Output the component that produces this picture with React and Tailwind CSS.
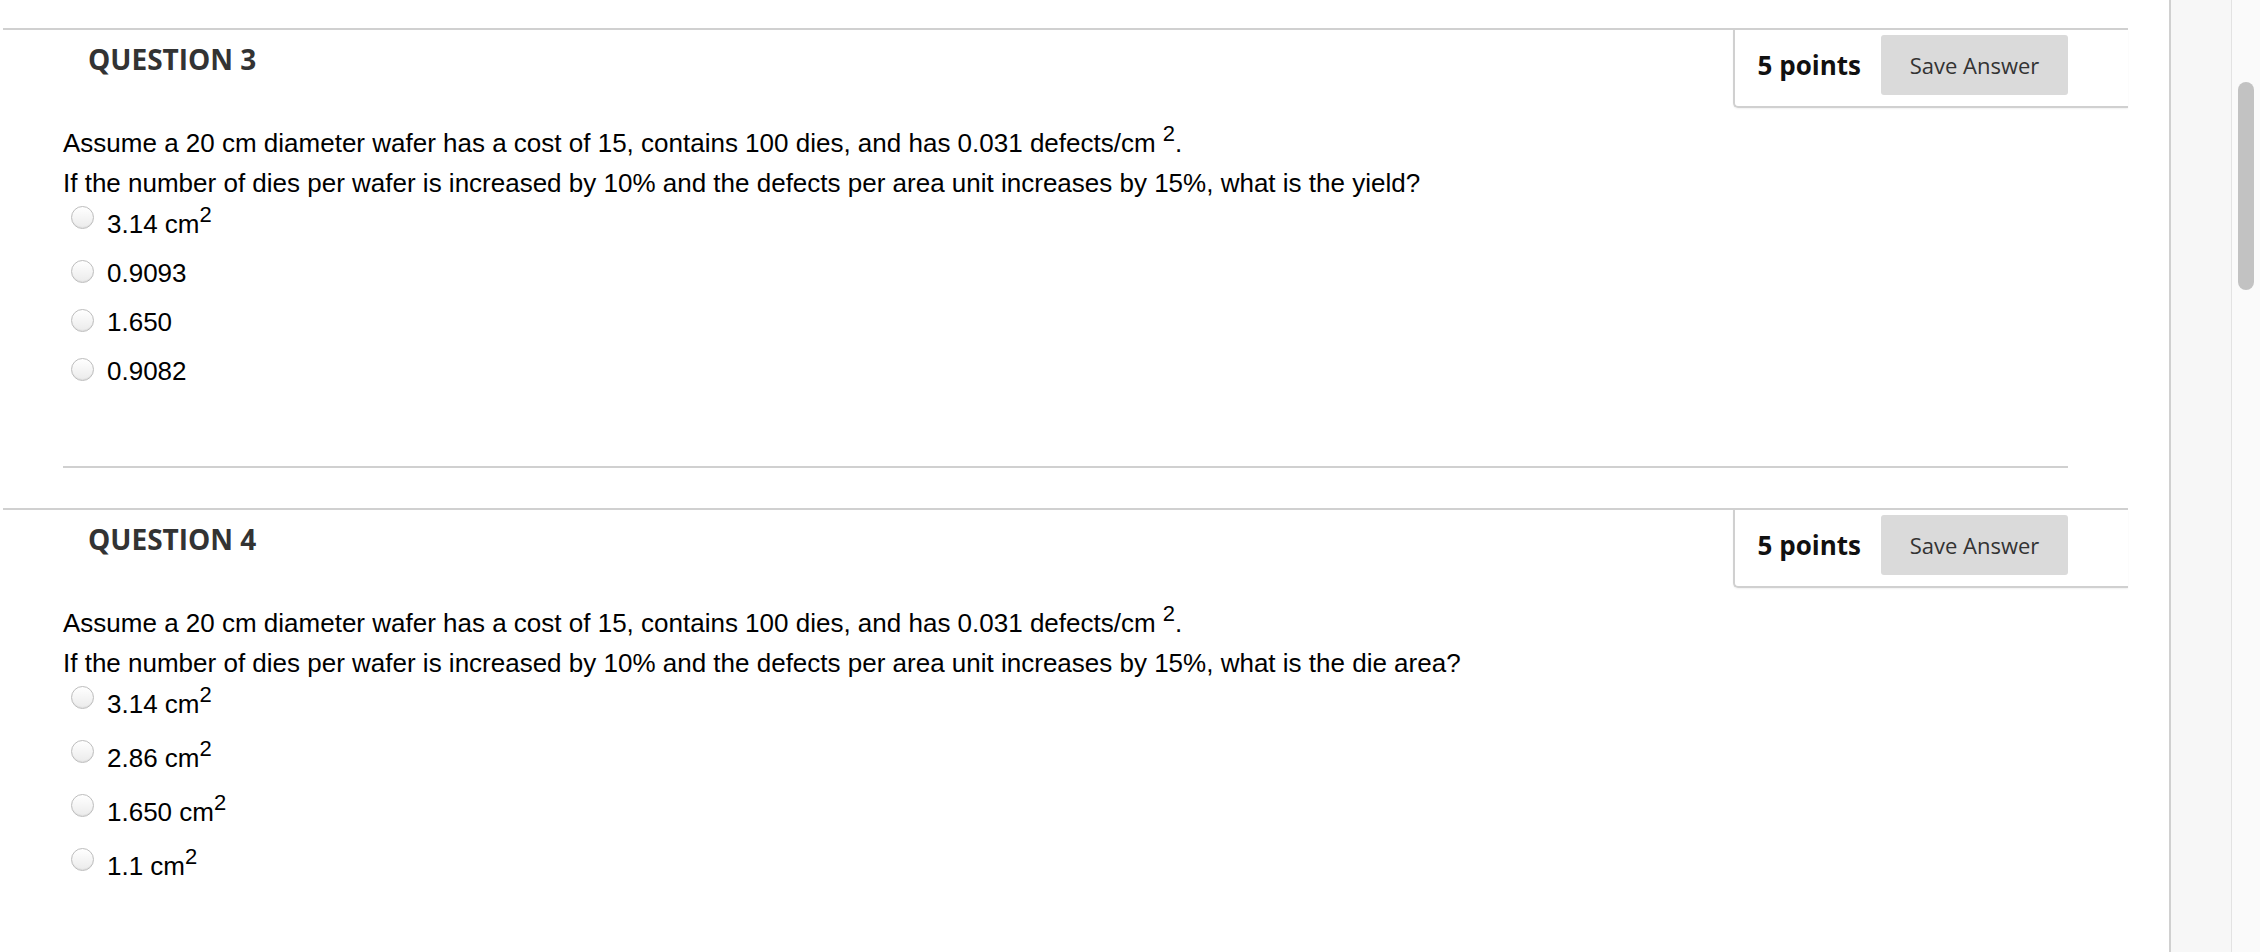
import React from "react";

const body = "font-['Liberation_Sans',Arial,sans-serif]";
const heading = "font-['Open_Sans',sans-serif]";

// raised "2" used for cm²
function Sq() {
  return <sup className="text-[22px]">2</sup>;
}

function Radio() {
  return (
    <span className="mt-[7px] ml-[8px] h-[23px] w-[23px] shrink-0 rounded-full border border-[#bdbdbd] bg-linear-to-b from-white to-[#ebebeb] shadow-[inset_0_-1px_1px_rgba(0,0,0,0.05)]" />
  );
}

function Option({ label, sq }) {
  return (
    <label className="flex items-start">
      <Radio />
      <span className={`ml-[13px] leading-[40px] ${sq ? "pt-[5px]" : ""}`}>
        {label}
        {sq && <Sq />}
      </span>
    </label>
  );
}

function Question({ number, ask, options }) {
  return (
    <section className="ml-[3px] w-[2125px] border-t-2 border-[#d0d0d0]">
      <div className="flex items-start justify-between">
        <h2 className={`${heading} pl-[85px] pt-[11px] text-[28px] leading-[36px] font-bold text-[#333]`}>
          QUESTION {number}
        </h2>
        <div className="flex items-center gap-[20px] rounded-bl-[5px] border-b-2 border-l-2 border-[#d0d0d0] pt-[5px] pr-[60px] pb-[11px] pl-[23px] shadow-[0_1px_2px_rgba(0,0,0,0.06)]">
          <span className={`${heading} text-[26px] font-bold text-[#111]`}>5 points</span>
          <button className={`${heading} h-[60px] w-[187px] rounded-[3px] bg-[#dadada] text-[22px] text-[#333]`}>
            Save Answer
          </button>
        </div>
      </div>

      <div className={`${body} mx-[60px] border-b-2 border-[#d0d0d0] pt-[15px] pb-[75px] text-[26px] text-black`}>
        <p className="leading-[40px]">
          Assume a 20 cm diameter wafer has a cost of 15, contains 100 dies, and has 0.031 defects/cm <Sq />.
        </p>
        <p className="leading-[40px]">
          If the number of dies per wafer is increased by 10% and the defects per area unit increases by 15%, {ask}
        </p>
        <div className="-mt-[4px] flex flex-col gap-[9px]">
          {options.map((o) => (
            <Option key={o.label} label={o.label} sq={o.sq} />
          ))}
        </div>
      </div>
    </section>
  );
}

export default function App() {
  return (
    <div className="flex h-[952px] w-full overflow-hidden bg-white">
      <main className="w-[2169px] shrink-0 pt-[28px]">
        <Question
          number={3}
          ask="what is the yield?"
          options={[
            { label: "3.14 cm", sq: true },
            { label: "0.9093" },
            { label: "1.650" },
            { label: "0.9082" },
          ]}
        />
        <div className="mt-[40px]">
          <Question
            number={4}
            ask="what is the die area?"
            options={[
              { label: "3.14 cm", sq: true },
              { label: "2.86 cm", sq: true },
              { label: "1.650 cm", sq: true },
              { label: "1.1 cm", sq: true },
            ]}
          />
        </div>
      </main>

      {/* right gutter + scrollbar */}
      <div className="w-[2px] shrink-0 bg-[#d0d0d0]" />
      <div className="w-[60px] shrink-0 bg-[#f7f7f7]" />
      <div className="w-px shrink-0 bg-[#e3e3e3]" />
      <div className="flex-1 bg-[#fafafa]">
        <div className="mt-[82px] ml-[6px] h-[208px] w-[16px] rounded-full bg-[#c2c2c2]" />
      </div>
    </div>
  );
}
